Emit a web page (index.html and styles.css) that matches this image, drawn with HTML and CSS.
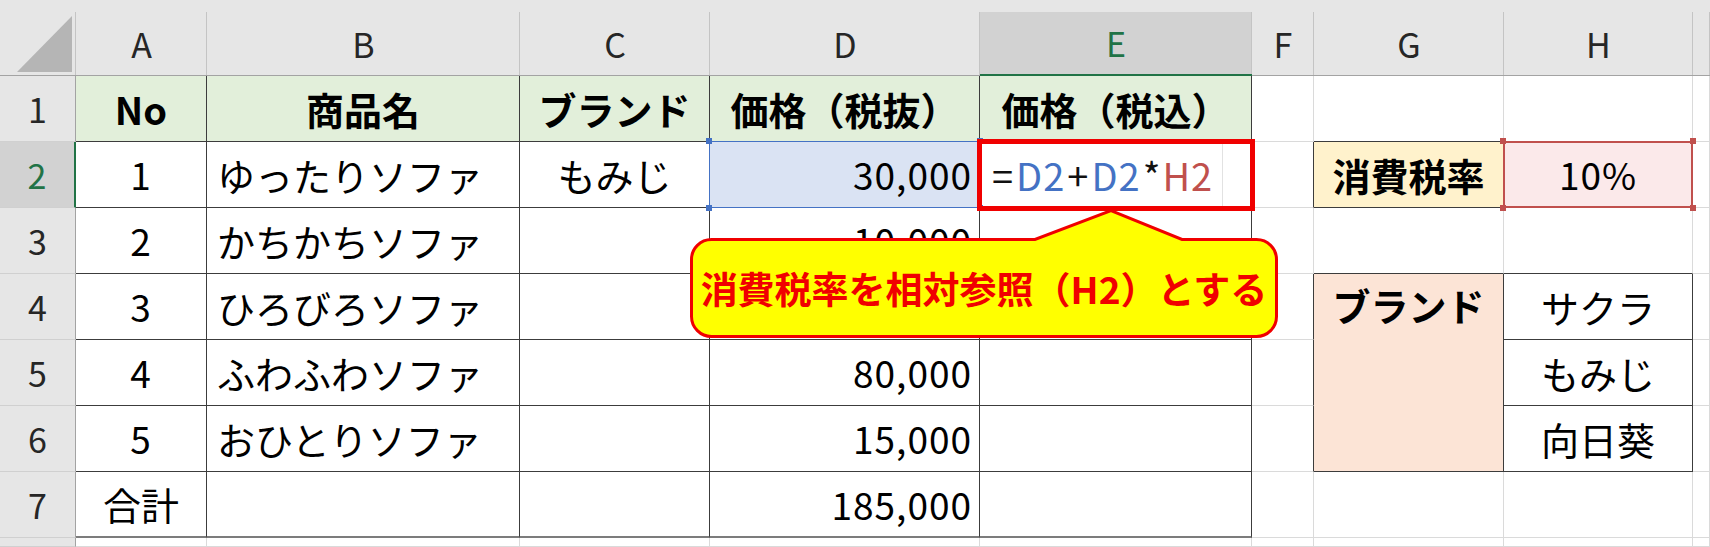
FILE: index.html
```html
<!DOCTYPE html>
<html lang="ja">
<head>
<meta charset="utf-8">
<title>消費税率 相対参照</title>
<link rel="stylesheet" href="styles.css">
</head>
<body>
<div class="sheet">
  <!-- header row -->
  <div class="corner"><svg width="76" height="76" viewBox="0 0 76 76"><polygon points="17,72 72,72 72,16" fill="#b5b5b5"/></svg></div>
  <div class="ch">A</div>
  <div class="ch">B</div>
  <div class="ch">C</div>
  <div class="ch">D</div>
  <div class="ch sel">E</div>
  <div class="ch">F</div>
  <div class="ch">G</div>
  <div class="ch">H</div>
  <div class="ch"></div>

  <!-- row 1 -->
  <div class="rh">1</div>
  <div class="c t hd ctr">No</div>
  <div class="c t hd ctr">商品名</div>
  <div class="c t hd ctr">ブランド</div>
  <div class="c t hd ctr">価格（税抜）</div>
  <div class="c t hd ctr">価格（税込）</div>
  <div class="c"></div>
  <div class="c bdark"></div>
  <div class="c bdark"></div>
  <div class="c"></div>

  <!-- row 2 -->
  <div class="rh sel">2</div>
  <div class="c t ctr num">1</div>
  <div class="c t lft">ゆったりソファ</div>
  <div class="c t ctr">もみじ</div>
  <div class="c t rgt num blue">30,000<i class="hl-blue"></i><i class="hdl b tl"></i><i class="hdl b tr"></i><i class="hdl b bl"></i><i class="hdl b br"></i></div>
  <div class="c t lft formula"><span class="op">=</span><span class="ref-b">D2</span><span class="op">+</span><span class="ref-b">D2</span><span class="op star">*</span><span class="ref-r">H2</span><i class="redbox"></i></div>
  <div class="c rdark"></div>
  <div class="c t rate-label ctr">消費税率</div>
  <div class="c t rate ctr num">10%<i class="hl-red"></i><i class="hdl r tl"></i><i class="hdl r tr"></i><i class="hdl r bl"></i><i class="hdl r br"></i></div>
  <div class="c"></div>

  <!-- row 3 -->
  <div class="rh">3</div>
  <div class="c t ctr num">2</div>
  <div class="c t lft">かちかちソファ</div>
  <div class="c t"></div>
  <div class="c t rgt num">10,000</div>
  <div class="c t"></div>
  <div class="c"></div>
  <div class="c bdark"></div>
  <div class="c bdark"></div>
  <div class="c"></div>

  <!-- row 4 -->
  <div class="rh">4</div>
  <div class="c t ctr num">3</div>
  <div class="c t lft">ひろびろソファ</div>
  <div class="c t"></div>
  <div class="c t"></div>
  <div class="c t"></div>
  <div class="c rdark"></div>
  <div class="c t brand">ブランド</div>
  <div class="c t ctr">サクラ</div>
  <div class="c"></div>

  <!-- row 5 -->
  <div class="rh">5</div>
  <div class="c t ctr num">4</div>
  <div class="c t lft">ふわふわソファ</div>
  <div class="c t"></div>
  <div class="c t rgt num">80,000</div>
  <div class="c t"></div>
  <div class="c rdark"></div>
  <div class="c t ctr">もみじ</div>
  <div class="c"></div>

  <!-- row 6 -->
  <div class="rh">6</div>
  <div class="c t ctr num">5</div>
  <div class="c t lft">おひとりソファ</div>
  <div class="c t"></div>
  <div class="c t rgt num">15,000</div>
  <div class="c t"></div>
  <div class="c rdark"></div>
  <div class="c t ctr">向日葵</div>
  <div class="c"></div>

  <!-- row 7 -->
  <div class="rh">7</div>
  <div class="c t last ctr">合計</div>
  <div class="c t last"></div>
  <div class="c t last"></div>
  <div class="c t last rgt num">185,000</div>
  <div class="c t last"></div>
  <div class="c"></div>
  <div class="c"></div>
  <div class="c"></div>
  <div class="c"></div>

  <!-- row 8 (partial) -->
  <div class="rh"></div>
  <div class="c"></div>
  <div class="c"></div>
  <div class="c"></div>
  <div class="c"></div>
  <div class="c"></div>
  <div class="c"></div>
  <div class="c"></div>
  <div class="c"></div>
  <div class="c"></div>

  <!-- callout annotation -->
  <div class="callout">
    <svg class="callout-shape" width="588" height="130" viewBox="0 0 588 130">
      <path d="M21.5,31.5 H345 L421,2.5 L492,31.5 H566.5 A20,20 0 0 1 586.5,51.5 V108.5 A20,20 0 0 1 566.5,128.5 H21.5 A20,20 0 0 1 1.5,108.5 V51.5 A20,20 0 0 1 21.5,31.5 Z" fill="#ffff00" stroke="#f00000" stroke-width="3" stroke-linejoin="miter"/>
    </svg>
    <div class="callout-text">消費税率を相対参照（H2）とする</div>
  </div>
</div>
</body>
</html>
```

FILE: styles.css
```css
* { box-sizing: border-box; margin: 0; padding: 0; }
html, body { background: #ffffff; }
body {
  margin: 0;
  overflow: hidden;
  font-family: "Noto Sans CJK JP", "Noto Sans", sans-serif;
  color: #000;
}

.sheet {
  position: relative;
  display: grid;
  grid-template-columns: 76px 131px 313px 190px 270px 272px 62px 190px 189px 17px;
  grid-template-rows: 76px repeat(7, 66px) 9px;
  width: 1710px;
  height: 547px;
}

/* select-all corner */
.corner {
  background: #e6e6e6;
  border-bottom: 1px solid #a3a3a3;
  background-image: linear-gradient(#c4c4c4, #c4c4c4);
  background-repeat: no-repeat;
  background-size: 1px 100%;
  background-position: right 0 top 12px;
}
.corner svg { display: block; }

/* column headers */
.ch {
  display: flex;
  align-items: center;
  justify-content: center;
  padding-top: 12px;
  font-size: 34px;
  line-height: 1;
  color: #262626;
  background-color: #e6e6e6;
  background-image: linear-gradient(#c4c4c4, #c4c4c4);
  background-repeat: no-repeat;
  background-size: 1px 100%;
  background-position: right 0 top 12px;
  border-bottom: 1px solid #a3a3a3;
}
.ch.sel {
  color: #217346;
  background-image: linear-gradient(#c4c4c4, #c4c4c4), linear-gradient(#d2d2d2, #d2d2d2);
  background-repeat: no-repeat, no-repeat;
  background-size: 1px 100%, 100% 100%;
  background-position: right 0 top 12px, left 0 top 12px;
  border-bottom: 2px solid #217346;
}

/* row headers */
.rh {
  display: flex;
  align-items: center;
  justify-content: center;
  font-size: 34px;
  line-height: 1;
  color: #262626;
  background: #e6e6e6;
  border-right: 1px solid #a3a3a3;
  border-bottom: 1px solid #d0d0d0;
}
.rh.sel {
  color: #217346;
  background: #d2d2d2;
  border-right: 2px solid #217346;
}

/* cells */
.c {
  position: relative;
  display: flex;
  align-items: center;
  font-size: 38px;
  line-height: 1;
  white-space: nowrap;
  border-right: 1px solid #dadada;
  border-bottom: 1px solid #dadada;
}
.ctr { justify-content: center; }
.lft { padding-left: 10px; }
.rgt { justify-content: flex-end; padding-right: 7px; }
.num { font-size: 37px; letter-spacing: 1px; }

.t { border-right-color: #3c3c3c; border-bottom-color: #3c3c3c; }
.last { border-bottom: 2px solid #7c7c7c; }
.bdark { border-bottom-color: #3c3c3c; }
.rdark { border-right-color: #3c3c3c; }

.hd { background: #e2efda; font-weight: 700; }
.blue { background: #dae3f3; }

.formula {
  padding-left: 10px;
  font-size: 38px;
  letter-spacing: 1px;
  background-image: linear-gradient(#e2e2e2, #e2e2e2);
  background-repeat: no-repeat;
  background-size: 1px 100%;
  background-position: left 242px top 0;
}
.op { color: #111; padding: 0 2px; }
.op.star { padding: 0 1px 0 2px; }
.ref-b { color: #4472c4; }
.ref-r { color: #c0504d; }

.rate-label { background: #fff2cc; font-weight: 700; }
.rate { background: #fbe9ea; }

.brand {
  grid-row: span 3;
  align-items: flex-start;
  justify-content: center;
  padding-top: 12px;
  background: #fce4d6;
  font-weight: 700;
}

/* range highlight overlays */
.hl-blue, .hl-red, .redbox, .hdl { position: absolute; display: block; }
.hl-blue {
  top: -1px; left: -1px; right: 0; bottom: -1px;
  border: 1px solid #4472c4;
}
.hl-red {
  top: -1px; left: -1px; right: -1px; bottom: -1px;
  border: 2px solid #c0504d;
}
.hdl { width: 6px; height: 6px; z-index: 2; }
.hdl.b { background: #4472c4; }
.hdl.r { background: #c0504d; }
.hdl.tl { top: -4px; left: -4px; }
.hdl.tr { top: -4px; right: -4px; }
.hdl.bl { bottom: -4px; left: -4px; }
.hdl.br { bottom: -4px; right: -4px; }

.redbox {
  top: -3px; left: -3px; right: -4px; bottom: -4px;
  border: 5px solid #f00000;
  z-index: 3;
}

/* callout annotation */
.callout {
  position: absolute;
  left: 690px;
  top: 208px;
  width: 588px;
  height: 130px;
  z-index: 5;
}
.callout-shape { position: absolute; left: 0; top: 0; display: block; }
.callout-text {
  position: absolute;
  left: 0; right: 0; top: 30px; bottom: 0;
  display: flex;
  align-items: center;
  justify-content: center;
  font-size: 37px;
  font-weight: 700;
  color: #f00000;
  line-height: 1;
  white-space: nowrap;
}
```
